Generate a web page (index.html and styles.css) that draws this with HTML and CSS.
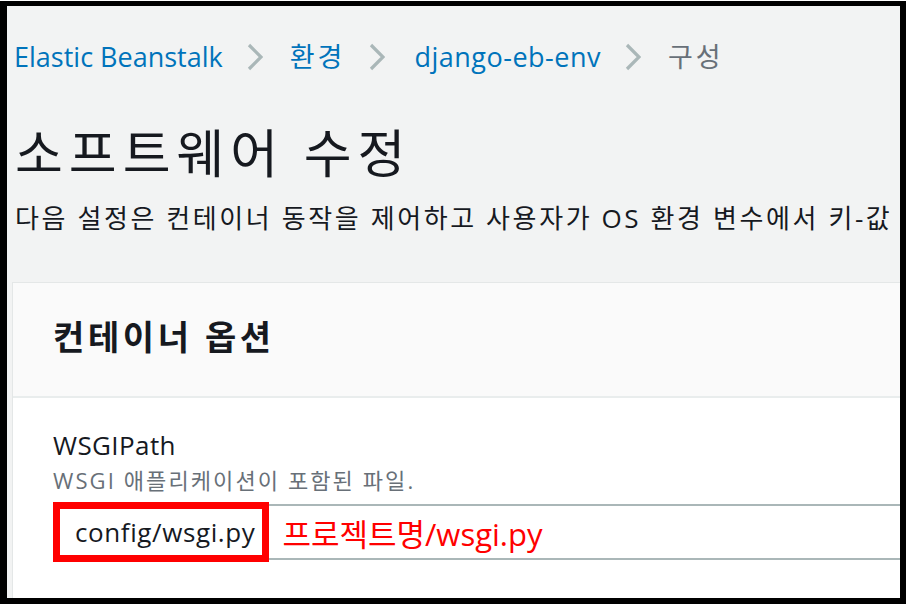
FILE: index.html
```html
<!DOCTYPE html>
<html lang="ko">
<head>
<meta charset="utf-8">
<link rel="stylesheet" href="styles.css">
<title>소프트웨어 수정</title>
</head>
<body>
<div class="frame">
  <nav class="crumbs">
    <a class="crumb link">Elastic Beanstalk</a>
    <svg class="chev" viewBox="0 0 16 28" width="16" height="28"><path d="M2 2 L14 14 L2 26" fill="none" stroke="#aab7b8" stroke-width="3.2"/></svg>
    <a class="crumb link ko">환경</a>
    <svg class="chev" viewBox="0 0 16 28" width="16" height="28"><path d="M2 2 L14 14 L2 26" fill="none" stroke="#aab7b8" stroke-width="3.2"/></svg>
    <a class="crumb link env">django-eb-env</a>
    <svg class="chev" viewBox="0 0 16 28" width="16" height="28"><path d="M2 2 L14 14 L2 26" fill="none" stroke="#aab7b8" stroke-width="3.2"/></svg>
    <span class="crumb current ko">구성</span>
  </nav>
  <h1 class="title">소프트웨어 수정</h1>
  <p class="desc">다음 설정은 컨테이너 동작을 제어하고 사용자가 OS 환경 변수에서 키-값</p>
  <section class="card">
    <div class="card-head">컨테이너 옵션</div>
    <div class="card-body">
      <div class="label">WSGIPath</div>
      <div class="hint">WSGI 애플리케이션이 포함된 파일.</div>
      <div class="input">
        <span class="value">config/wsgi.py</span>
        <span class="note">프로젝트명/wsgi.py</span>
        <span class="mark"></span>
      </div>
    </div>
  </section>
</div>
</body>
</html>
```
FILE: styles.css
```css
* { box-sizing: border-box; }
html, body { margin: 0; padding: 0; background: #fff; }
body { font-family: "Open Sans", "Noto Sans CJK KR", sans-serif; color: #16191f; }

.frame {
  margin-top: 1px;
  width: 906px;
  height: 603px;
  border-style: solid;
  border-color: #000;
  border-width: 5px 6px 6px 7px;
  background: #f2f3f3;
  overflow: hidden;
  white-space: nowrap;
}

.crumbs {
  display: flex;
  align-items: center;
  height: 40px;
  margin-top: 31px;
  padding-left: 7px;
  font-size: 27px;
}
.crumb { line-height: 40px; }
.ko { letter-spacing: 3px; }
.env { letter-spacing: 0.5px; margin-left: 2px; }
.link { color: #0073bb; }
.current { color: #687078; }
.chev { margin: 0 27px 0 24px; flex: none; }

.title {
  margin: 44px 0 0 8px;
  font-size: 52px;
  font-weight: 400;
  line-height: 64px;
  letter-spacing: 6px;
}

.desc {
  margin: 15px 0 0 8px;
  font-size: 26px;
  line-height: 36px;
  color: #16191f;
  letter-spacing: 2.6px;
}

.card {
  margin: 46px 0 0 5px;
  width: 1000px;
  border: 1px solid #e4e7e7;
  background: #fff;
}
.card-head {
  background: #fafafa;
  border-bottom: 2px solid #e9eded;
  padding: 30px 0 35px 40px;
  font-size: 34px;
  font-weight: 700;
  line-height: 48px;
  letter-spacing: 3.6px;
}
.card-body {
  padding: 30px 0 60px 40px;
}
.label {
  font-size: 26px;
  line-height: 34px;
  letter-spacing: 0.4px;
}
.hint {
  margin-top: 3px;
  font-size: 22px;
  line-height: 30px;
  color: #687078;
  letter-spacing: 2.1px;
}
.input {
  position: relative;
  display: flex;
  align-items: center;
  margin-top: 9px;
  height: 56px;
  border: 2px solid #aab7b8;
  border-right: none;
  padding-left: 20px;
}
.value {
  font-size: 26px;
  color: #16191f;
  letter-spacing: 0.6px;
}
.note {
  margin-left: 27px;
  font-size: 31px;
  color: #ff0000;
}
.mark {
  position: absolute;
  left: -2px;
  top: -4px;
  width: 216px;
  height: 60px;
  border: 7px solid #ff0000;
}
```
